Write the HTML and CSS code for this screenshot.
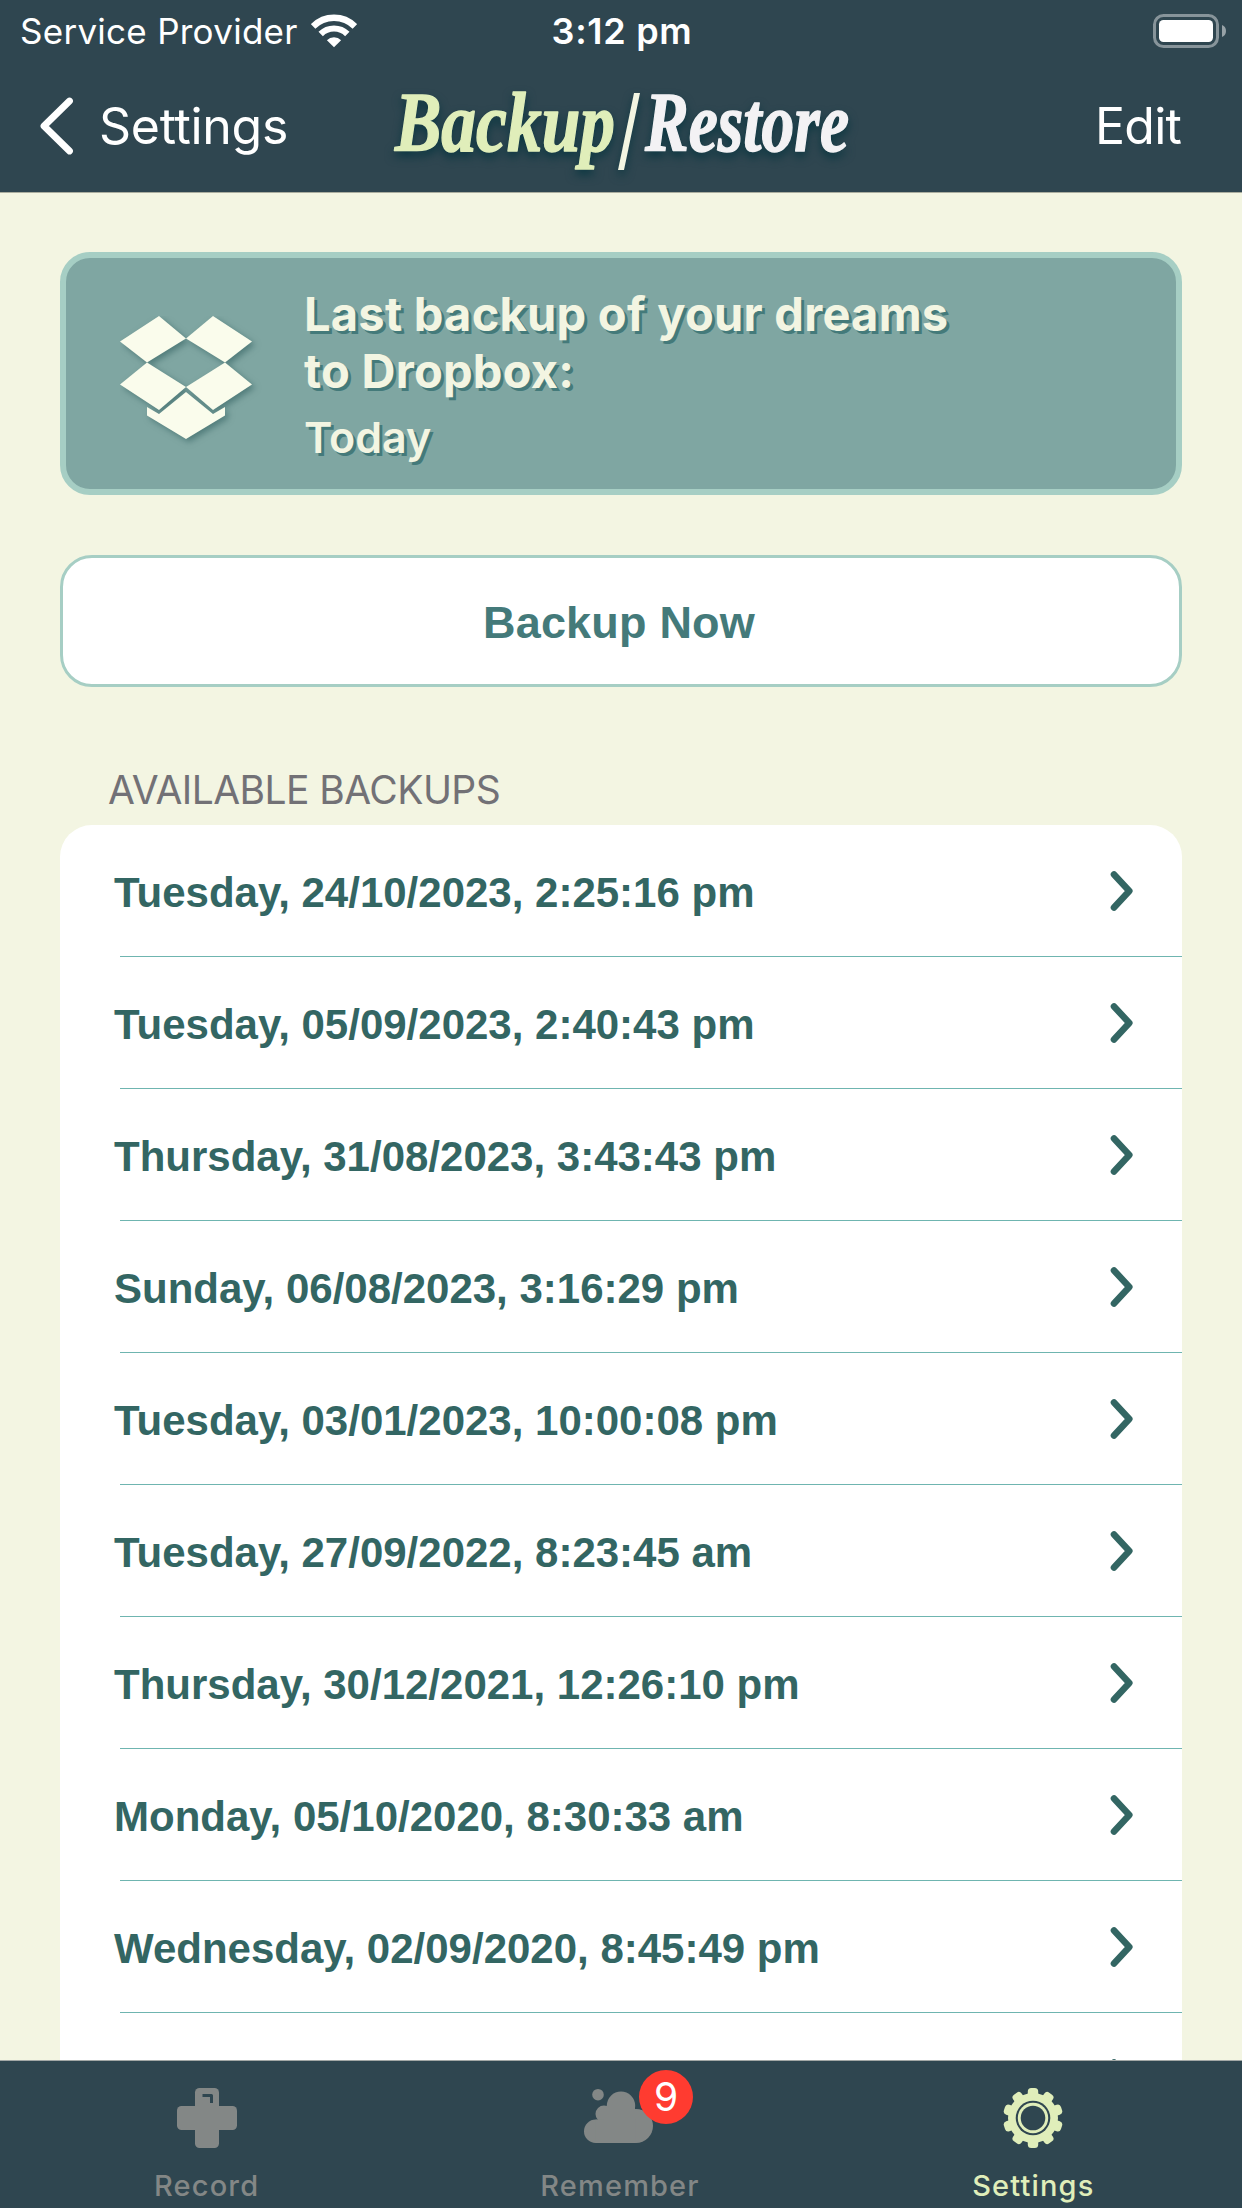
FILE: index.html
```html
<!DOCTYPE html>
<html lang="en">
<head>
    <meta charset="UTF-8">
    <meta name="viewport" content="width=device-width, initial-scale=1.0">
    <title>Backup/Restore</title>
    <link rel="stylesheet" href="styles.css">
</head>
<body>
    <svg class="defs" width="0" height="0">
        <symbol id="chevron" viewBox="0 0 24 42">
            <path d="M4 4.4 L19.3 21 L4 37.5" fill="none" stroke="#336663" stroke-width="6.6" stroke-linecap="round" stroke-linejoin="round"/>
        </symbol>
    </svg>

    <header class="header">
        <div class="status-bar">
            <div class="carrier">
                <span>Service Provider</span>
                <svg width="46" height="34" viewBox="0 0 46 34">
                    <path d="M2.1 12.4 A29.5 29.5 0 0 1 43.9 12.4" fill="none" stroke="#fff" stroke-width="6.4"/>
                    <path d="M9.7 20 A18.8 18.8 0 0 1 36.3 20" fill="none" stroke="#fff" stroke-width="6.2"/>
                    <path d="M23 33.3 L15.9 26.2 A10 10 0 0 1 30.1 26.2 Z" fill="#fff"/>
                </svg>
            </div>
            <div class="clock">3:12 pm</div>
            <svg class="battery" width="74" height="34" viewBox="0 0 74 34">
                <rect x="1.5" y="1.5" width="63" height="31" rx="9" fill="none" stroke="#87949a" stroke-width="3"/>
                <rect x="6" y="6" width="54" height="22" rx="4.5" fill="#fff"/>
                <path d="M69 11 C71.7 12 73 14.3 73 17 C73 19.7 71.7 22 69 23 Z" fill="#97a2a7"/>
            </svg>
        </div>
        <div class="nav-bar">
            <div class="back">
                <svg width="35" height="58" viewBox="0 0 35 58">
                    <path d="M30.5 4 L5 29 L30.5 54" fill="none" stroke="#fff" stroke-width="6.8" stroke-linecap="round" stroke-linejoin="round"/>
                </svg>
                <span>Settings</span>
            </div>
            <svg class="logo" width="500" height="116" viewBox="0 -2 500 116">
                <text class="logo-backup" x="25" y="81" textLength="220" lengthAdjust="spacingAndGlyphs">Backup</text>
                <path d="M264 23 L270 23 L254 100 L248 100 Z" fill="#f3f5e2"/>
                <text class="logo-restore" x="275" y="81" textLength="204" lengthAdjust="spacingAndGlyphs">Restore</text>
            </svg>
            <div class="edit">Edit</div>
        </div>
    </header>

    <main class="content">
        <section class="status-card">
            <svg width="150" height="140" viewBox="0 0 150 140">
                <g class="dropbox">
                    <path d="M39 0 L66 22.5 L27 46.5 L0 25.5 Z"/>
                    <path d="M93 0 L132 25.5 L105 46.5 L66 22.5 Z"/>
                    <path d="M27 46.5 L66 71 L39 94 L0 68.5 Z"/>
                    <path d="M105 46.5 L132 68.5 L93 94 L66 71 Z"/>
                    <path d="M66 76 L93 98 L105 91 L105 99.5 L66 123 L27 99.5 L27 91 L39 98 Z"/>
                </g>
            </svg>
            <div class="status-text">
                <p class="status-title">Last backup of your dreams<br>to Dropbox:</p>
                <p class="status-date">Today</p>
            </div>
        </section>

        <button class="backup-button">Backup Now</button>

        <h2 class="list-title">AVAILABLE BACKUPS</h2>
        <ul class="backup-list">
            <li><span>Tuesday, 24/10/2023, 2:25:16 pm</span><svg><use href="#chevron"/></svg></li>
            <li><span>Tuesday, 05/09/2023, 2:40:43 pm</span><svg><use href="#chevron"/></svg></li>
            <li><span>Thursday, 31/08/2023, 3:43:43 pm</span><svg><use href="#chevron"/></svg></li>
            <li><span>Sunday, 06/08/2023, 3:16:29 pm</span><svg><use href="#chevron"/></svg></li>
            <li><span>Tuesday, 03/01/2023, 10:00:08 pm</span><svg><use href="#chevron"/></svg></li>
            <li><span>Tuesday, 27/09/2022, 8:23:45 am</span><svg><use href="#chevron"/></svg></li>
            <li><span>Thursday, 30/12/2021, 12:26:10 pm</span><svg><use href="#chevron"/></svg></li>
            <li><span>Monday, 05/10/2020, 8:30:33 am</span><svg><use href="#chevron"/></svg></li>
            <li><span>Wednesday, 02/09/2020, 8:45:49 pm</span><svg><use href="#chevron"/></svg></li>
            <li><span></span><svg><use href="#chevron"/></svg></li>
        </ul>
    </main>

    <nav class="tab-bar">
        <div class="tab">
            <div class="tab-icon">
                <svg width="60" height="60" viewBox="0 0 60 60">
                    <rect x="18" y="0" width="24" height="60" rx="4.5" fill="#838786"/>
                    <rect x="0" y="18" width="60" height="24" rx="4.5" fill="#838786"/>
                    <path d="M25.5 7.5 H34.5 V15" fill="none" stroke="#2f4650" stroke-width="3" stroke-linejoin="round"/>
                </svg>
            </div>
            <span>Record</span>
        </div>
        <div class="tab">
            <div class="tab-icon">
                <svg width="70" height="60" viewBox="1 0 70 60" overflow="visible" fill="#838786">
                    <circle cx="14" cy="6.7" r="5.8"/>
                    <circle cx="37" cy="17.8" r="14.2"/>
                    <circle cx="20" cy="26" r="8.5"/>
                    <circle cx="11.7" cy="43.3" r="11.7"/>
                    <circle cx="52" cy="38" r="17"/>
                    <rect x="11.7" y="31.6" width="40" height="23.4"/>
                    <rect x="20" y="20" width="31" height="16"/>
                </svg>
                <span class="badge">9</span>
            </div>
            <span>Remember</span>
        </div>
        <div class="tab active">
            <div class="tab-icon">
                <svg width="60" height="60" viewBox="-30 -30 60 60" fill="#e0eeba">
                    <circle r="25"/>
                    <rect x="-5.2" y="-30" width="10.4" height="60" rx="3.5"/>
                    <rect x="-5.2" y="-30" width="10.4" height="60" rx="3.5" transform="rotate(36)"/>
                    <rect x="-5.2" y="-30" width="10.4" height="60" rx="3.5" transform="rotate(72)"/>
                    <rect x="-5.2" y="-30" width="10.4" height="60" rx="3.5" transform="rotate(108)"/>
                    <rect x="-5.2" y="-30" width="10.4" height="60" rx="3.5" transform="rotate(144)"/>
                    <circle r="17.3" fill="#2f4650"/>
                    <circle r="15.2"/>
                    <circle r="12.3" fill="#2f4650"/>
                </svg>
            </div>
            <span>Settings</span>
        </div>
    </nav>
</body>
</html>
```
FILE: styles.css
```css
* {
    box-sizing: border-box;
}
body {
    font-family: Inter, sans-serif;
    display: flex;
    flex-direction: column;
    height: 2208px;
    margin: 0;
    background-color: #f3f5e2;
    overflow: hidden;
}
svg {
    display: block;
    flex: none;
}
.defs {
    position: absolute;
}

/* header */
.header {
    flex: none;
    height: 193px;
    background-color: #2f4650;
    border-bottom: 1px solid #aaad9f;
    color: white;
}
.status-bar {
    display: grid;
    grid-template-columns: 1fr auto 1fr;
    align-items: center;
    height: 62px;
    padding: 0 15px 0 17px;
    font-size: 35px;
}
.carrier {
    display: flex;
    align-items: center;
    gap: 13px;
    padding-left: 3px;
    letter-spacing: 0.27px;
}
.clock {
    font-size: 36px;
    font-weight: 600;
    letter-spacing: 0.7px;
}
.battery {
    justify-self: end;
}
.nav-bar {
    display: grid;
    grid-template-columns: 1fr 500px 1fr;
    align-items: center;
    height: 128px;
    padding: 0 61px 0 39px;
    font-size: 50px;
    letter-spacing: -0.3px;
}
.back {
    display: flex;
    align-items: center;
    gap: 25px;
}
.logo {
    margin-left: 10px;
    overflow: visible;
    filter: drop-shadow(0 5px 5px #0b3741);
}
.logo text {
    font-family: "Liberation Serif", serif;
    font-size: 84px;
    font-weight: bold;
    font-style: italic;
    letter-spacing: 0;
    stroke-width: 1.5px;
    stroke-linejoin: round;
}
.logo-backup {
    fill: #e0eeba;
    stroke: #e0eeba;
}
.logo-restore {
    fill: #f3f2f4;
    stroke: #f3f2f4;
}
.edit {
    text-align: right;
    letter-spacing: -0.8px;
}

/* content */
.content {
    flex: 1;
    min-height: 0;
    overflow: hidden;
    padding: 59px 60px 0;
}
.status-card {
    display: flex;
    height: 243px;
    padding-left: 54px;
    background-color: #7fa6a2;
    border: 6px solid #a6cec4;
    border-radius: 30px;
    color: #f3f5e2;
}
.status-card svg {
    margin-top: 58px;
}
.dropbox {
    fill: #fafcec;
    filter: drop-shadow(3px 3px 3px rgba(50, 95, 95, 0.6));
}
.status-text {
    padding: 27px 0 0 34px;
    text-shadow: 3px 3px 0 #447a7a;
}
.status-text p {
    margin: 0;
}
.status-title {
    font-size: 47px;
    font-weight: 700;
    line-height: 57px;
    letter-spacing: 0.25px;
}
.status-text .status-date {
    margin-top: 13px;
    font-size: 43px;
    font-weight: 600;
    line-height: 50px;
}
.backup-button {
    display: block;
    width: 100%;
    height: 132px;
    margin-top: 60px;
    padding: 4px 4px 0 0;
    background-color: white;
    border: 3px solid #a6cec4;
    border-radius: 32px;
    color: #447a7a;
    font-family: "Liberation Sans", Arial, sans-serif;
    font-size: 45px;
    font-weight: bold;
    letter-spacing: 0.2px;
}
.list-title {
    margin: 79px 0 11px 48px;
    color: #727176;
    font-size: 39px;
    font-weight: 400;
    line-height: 48px;
    letter-spacing: -0.55px;
}
.backup-list {
    margin: 0;
    padding: 0 0 0 60px;
    list-style: none;
    background-color: white;
    border-radius: 32px 32px 0 0;
    color: #336663;
    font-family: "Liberation Sans", Arial, sans-serif;
    font-size: 42px;
    font-weight: bold;
}
.backup-list li {
    display: flex;
    align-items: center;
    justify-content: space-between;
    height: 132px;
    padding: 1px 48px 0 0;
    border-bottom: 1px solid #6fb5b0;
}
.backup-list span {
    margin-left: -6px;
    padding-top: 4px;
}
.backup-list svg {
    width: 24px;
    height: 42px;
}

/* tab bar */
.tab-bar {
    display: grid;
    grid-template-columns: repeat(3, 1fr);
    flex: none;
    height: 148px;
    padding-right: 2px;
    background-color: #2f4650;
    border-top: 1px solid #a3a8a6;
    color: #838786;
}
.tab {
    display: flex;
    flex-direction: column;
    align-items: center;
    gap: 20px;
    padding-top: 27px;
    font-size: 29px;
    font-weight: 500;
    line-height: 36px;
    letter-spacing: 1.15px;
}
.tab.active {
    color: #e0eeba;
}
.tab-icon {
    position: relative;
}
.badge {
    position: absolute;
    left: 54px;
    top: -18px;
    width: 54px;
    height: 54px;
    border-radius: 50%;
    background-color: #ff3b30;
    color: white;
    font-size: 39px;
    font-weight: 400;
    line-height: 54px;
    letter-spacing: 0;
    text-align: center;
}
```
